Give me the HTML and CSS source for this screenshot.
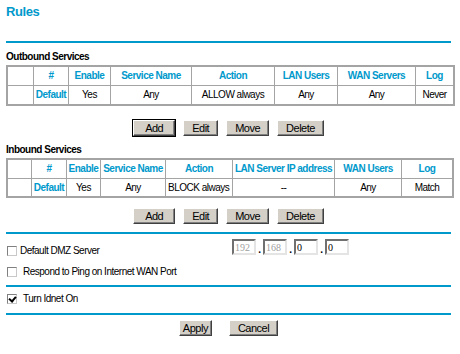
FILE: index.html
```html
<!DOCTYPE html>
<html>
    <head>
        <meta charset="utf-8" />
        <link rel="stylesheet" href="styles.css">
    </head>
    <body>
        <div class="page">
            <h1 class="title">Rules</h1>
            <div class="divider"></div>

            <div class="section-label">Outbound Services</div>
            <table class="services outbound">
                <colgroup>
                    <col width="26"><col width="35"><col width="42"><col width="81">
                    <col width="83"><col width="63"><col width="78"><col width="37">
                </colgroup>
                <tr class="head">
                    <td></td>
                    <td>#</td>
                    <td>Enable</td>
                    <td>Service Name</td>
                    <td>Action</td>
                    <td>LAN Users</td>
                    <td>WAN Servers</td>
                    <td>Log</td>
                </tr>
                <tr>
                    <td></td>
                    <td class="rule-name">Default</td>
                    <td>Yes</td>
                    <td>Any</td>
                    <td>ALLOW always</td>
                    <td>Any</td>
                    <td>Any</td>
                    <td>Never</td>
                </tr>
            </table>

            <div class="buttons first-row">
                <button class="btn default">Add</button>
                <button class="btn">Edit</button>
                <button class="btn">Move</button>
                <button class="btn">Delete</button>
            </div>

            <div class="section-label">Inbound Services</div>
            <table class="services inbound">
                <colgroup>
                    <col width="24"><col width="35"><col width="34"><col width="65">
                    <col width="67"><col width="102"><col width="67"><col width="50">
                </colgroup>
                <tr class="head">
                    <td></td>
                    <td>#</td>
                    <td>Enable</td>
                    <td>Service Name</td>
                    <td>Action</td>
                    <td>LAN Server IP address</td>
                    <td>WAN Users</td>
                    <td>Log</td>
                </tr>
                <tr>
                    <td></td>
                    <td class="rule-name">Default</td>
                    <td>Yes</td>
                    <td>Any</td>
                    <td class="left">BLOCK always</td>
                    <td>--</td>
                    <td>Any</td>
                    <td>Match</td>
                </tr>
            </table>

            <div class="buttons second-row">
                <button class="btn wide">Add</button>
                <button class="btn">Edit</button>
                <button class="btn">Move</button>
                <button class="btn">Delete</button>
            </div>

            <div class="divider"></div>

            <div class="dmz-row">
                <label class="check first"><input type="checkbox">Default DMZ Server</label>
                <div class="ip">
                    <input class="octet" type="text" value="192" disabled><span class="dot">.</span>
                    <input class="octet" type="text" value="168" disabled><span class="dot">.</span>
                    <input class="octet" type="text" value="0"><span class="dot">.</span>
                    <input class="octet" type="text" value="0">
                </div>
            </div>
            <div class="opt-row ping">
                <label class="check"><input type="checkbox">Respond to Ping on Internet WAN Port</label>
            </div>

            <div class="divider"></div>

            <div class="opt-row idnet">
                <label class="check"><input type="checkbox" checked>Turn Idnet On</label>
            </div>

            <div class="divider"></div>

            <div class="buttons apply-row">
                <button class="btn narrow">Apply</button>
                <button class="btn">Cancel</button>
            </div>
        </div>
    </body>
</html>
```

FILE: styles.css
```css
body {
    margin: 0;
    padding: 0 0 0 6px;
    font-family: "Liberation Sans", Arial, sans-serif;
    font-size: 10px;
    letter-spacing: -0.5px;
    color: black;
    background-color: white;
}

.page {
    width: 445px;
}

.title {
    margin: 0;
    height: 41px;
    box-sizing: border-box;
    padding-top: 4px;
    font-size: 13px;
    line-height: 16px;
    font-weight: bold;
    letter-spacing: -0.4px;
    color: #0099cc;
}

.divider {
    height: 2px;
    background-color: #0099cc;
}

.section-label {
    margin: 8px 0 2px 0;
    line-height: 12px;
    font-weight: bold;
}

.services {
    width: 445px;
    table-layout: fixed;
    border-collapse: separate;
    border-spacing: 0;
    border: solid 2px #a4a4a4;
    font-size: 10px;
    letter-spacing: -0.5px;
}

.inbound {
    width: 444px;
}

.services td {
    padding: 0;
    height: 18px;
    line-height: 12px;
    text-align: center;
    border-right: solid 1px #a4a4a4;
    border-bottom: solid 1px #a4a4a4;
    white-space: nowrap;
    overflow: hidden;
}

.services td:last-child {
    border-right: none;
}

.services tr:last-child td {
    border-bottom: none;
}

.inbound tr:last-child td {
    height: 17px;
}

.services .head td,
.services .rule-name {
    color: #0099cc;
    font-weight: bold;
}

.services .left {
    text-align: left;
    padding-left: 2px;
}

.buttons {
    display: flex;
    justify-content: center;
    gap: 8px;
}

.first-row {
    margin: 14px 0 3px 0;
}

.second-row {
    margin: 10px 0 8px 0;
}

.apply-row {
    margin-top: 5px;
    gap: 17px;
}

.btn {
    height: 16px;
    padding: 0 8px;
    font-family: "Liberation Sans", Arial, sans-serif;
    font-size: 11px;
    letter-spacing: -0.5px;
    line-height: 12px;
    color: black;
    background-color: #d4d0c8;
    border: solid 1px;
    border-color: white #404040 #404040 white;
    box-shadow: inset -1px -1px #808080;
}

.default {
    padding: 0 11px;
    outline: solid 1px black;
}

.wide {
    padding: 0 11px;
}

.narrow {
    padding: 0 3px;
}

.dmz-row {
    display: flex;
    align-items: flex-start;
    padding-top: 5px;
}

.dmz-row .check {
    width: 226px;
    margin-top: 6px;
}

.check {
    display: flex;
    align-items: center;
    height: 11px;
}

.check input {
    appearance: none;
    position: relative;
    width: 10px;
    height: 10px;
    margin: 0 6px 0 1px;
    border: solid 1px #808080;
    border-color: #808080 #c8c8c8 #c8c8c8 #808080;
    background-color: white;
}

.first input {
    margin-right: 3px;
}

.check input:checked::after {
    content: "";
    position: absolute;
    left: 2px;
    top: 0px;
    width: 3px;
    height: 5px;
    border: solid black;
    border-width: 0 2px 2px 0;
    transform: rotate(40deg);
}

.ip {
    display: flex;
    align-items: flex-end;
}

.octet {
    width: 24px;
    height: 16px;
    box-sizing: border-box;
    padding: 0 0 0 1px;
    font-family: "Liberation Serif", "Times New Roman", serif;
    font-size: 10px;
    letter-spacing: 0;
    color: black;
    background-color: white;
    border: solid 2px;
    border-color: #707070 #e4e4e4 #e4e4e4 #707070;
}

.octet:disabled {
    color: #a0a0a0;
}

.dot {
    width: 7px;
    text-align: center;
    font-weight: bold;
}

.ping {
    margin: 10px 0 8px 0;
}

.idnet {
    margin: 6px 0 9px 0;
}
```
